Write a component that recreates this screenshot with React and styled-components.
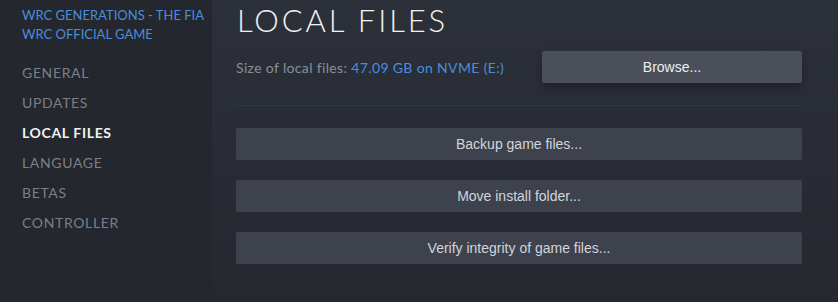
import styled, { createGlobalStyle } from 'styled-components';

const GlobalStyle = createGlobalStyle`
  html, body {
    margin: 0;
    padding: 0;
    background: #24272e;
  }
  * {
    box-sizing: border-box;
  }
`;

const NAV = ['General', 'Updates', 'Local Files', 'Language', 'Betas', 'Controller'];

const ACTIONS = ['Backup game files...', 'Move install folder...', 'Verify integrity of game files...'];

function App() {
  return (
    <>
      <GlobalStyle />
      <Page>
        <Sidebar>
          <GameTitle>WRC GENERATIONS - THE FIA WRC OFFICIAL GAME</GameTitle>
          <Nav>
            {NAV.map((item) => (
              <NavItem key={item} $active={item === 'Local Files'}>
                {item}
              </NavItem>
            ))}
          </Nav>
        </Sidebar>
        <Main>
          <Heading>Local Files</Heading>
          <InfoRow>
            <SizeText>
              Size of local files: <Highlight>47.09 GB on NVME (E:)</Highlight>
            </SizeText>
            <BrowseButton>Browse...</BrowseButton>
          </InfoRow>
          <Divider />
          <Actions>
            {ACTIONS.map((label) => (
              <ActionButton key={label}>{label}</ActionButton>
            ))}
          </Actions>
        </Main>
      </Page>
    </>
  );
}

export default App;

const Page = styled.div`
  display: flex;
  width: 838px;
  height: 302px;
  overflow: hidden;
  font-family: Lato, 'Noto Sans', sans-serif;
`;

const Sidebar = styled.div`
  width: 212px;
  flex-shrink: 0;
  background: #24272e;
  padding: 6px 0 0 22px;
`;

const GameTitle = styled.div`
  color: #4b8ddb;
  font-size: 13px;
  line-height: 19px;
  padding-right: 6px;
`;

const Nav = styled.div`
  display: flex;
  flex-direction: column;
  margin-top: 13px;
`;

const NavItem = styled.div`
  height: 30px;
  display: flex;
  align-items: center;
  text-transform: uppercase;
  font-size: 14px;
  letter-spacing: 0.65px;
  color: ${({ $active }) => ($active ? '#f2f2f2' : '#7c7f86')};
  font-weight: ${({ $active }) => ($active ? 700 : 400)};
`;

const Main = styled.div`
  flex: 1;
  padding: 0 36px 0 24px;
  background: linear-gradient(180deg, #2c3039 0%, #282b33 60%, #25282f 100%);
  display: flex;
  flex-direction: column;
`;

const Heading = styled.div`
  text-transform: uppercase;
  color: #f2f2f2;
  font-size: 31px;
  font-weight: 300;
  letter-spacing: 2.9px;
  line-height: 40px;
  margin-left: 1px;
`;

const InfoRow = styled.div`
  display: flex;
  align-items: center;
  justify-content: space-between;
  margin-top: 11px;
`;

const SizeText = styled.div`
  color: #8b9097;
  font-size: 14px;
  letter-spacing: 0.35px;
`;

const Highlight = styled.span`
  color: #4b8ddb;
`;

const BrowseButton = styled.div`
  width: 260px;
  height: 32px;
  display: flex;
  align-items: center;
  justify-content: center;
  background: #4a4f5a;
  border-radius: 2px;
  box-shadow: 0 5px 8px rgba(0, 0, 0, 0.25);
  color: #eeeeee;
  font-family: 'Liberation Sans', Arial, sans-serif;
  font-size: 14px;
`;

const Divider = styled.div`
  height: 1px;
  background: #33363e;
  margin-top: 22px;
`;

const Actions = styled.div`
  display: flex;
  flex-direction: column;
  gap: 20px;
  margin-top: 22px;
`;

const ActionButton = styled.div`
  height: 32px;
  display: flex;
  align-items: center;
  justify-content: center;
  background: #3d424d;
  border-radius: 2px;
  color: #d2d5da;
  font-family: 'Liberation Sans', Arial, sans-serif;
  font-size: 14px;
`;
